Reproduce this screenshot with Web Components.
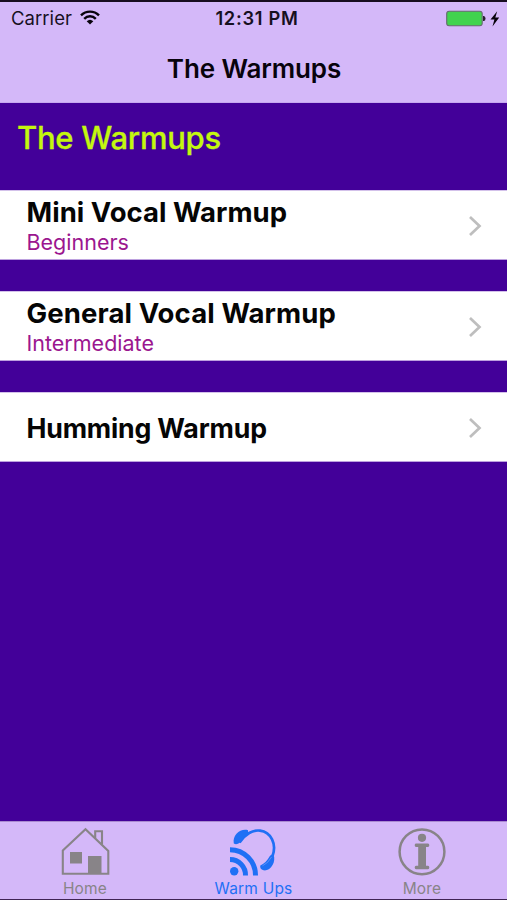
<!DOCTYPE html>
<html lang="en">
<head>
<meta charset="utf-8">
<title>The Warmups</title>
<style>
  body {
    margin: 0;
    font-family: Inter, "Liberation Sans", sans-serif;
  }
</style>
</head>
<body>
<app-screen>
  <status-bar slot="top"></status-bar>
  <nav-title slot="top">The Warmups</nav-title>
  <section-title>The Warmups</section-title>
  <warmup-row style="--spacing:0.03px">Mini Vocal Warmup<span slot="level">Beginners</span></warmup-row>
  <warmup-row style="--spacing:0.11px">General Vocal Warmup<span slot="level">Intermediate</span></warmup-row>
  <warmup-row style="--spacing:-0.18px; --size:26.7px">Humming Warmup</warmup-row>
  <tab-bar slot="bottom">
    <tab-item icon="home">Home</tab-item>
    <tab-item icon="warmups" active>Warm Ups</tab-item>
    <tab-item icon="more">More</tab-item>
  </tab-bar>
</app-screen>

<script>
function attach(el, html) {
  let template = document.createElement('template');
  template.innerHTML = html;
  el.attachShadow({ mode: "open" }).appendChild(template.content.cloneNode(true));
}

customElements.define("app-screen", class AppScreen extends HTMLElement {
  constructor() {
    super();
    attach(this, `
<style>
:host{
  display:flex;
  flex-direction:column;
  box-sizing:border-box;
  height:900px;
  overflow:hidden;
  background:#430099;
  border-top:2px solid #170d20;
  border-bottom:1px solid #402455;
}
header{
  box-sizing:border-box;
  height:101px;
  background:#d4b8f9;
  border-bottom:1px solid #c6a8ef;
}
main{
  flex:1;
}
</style>
<header><slot name="top"></slot></header>
<main><slot></slot></main>
<slot name="bottom"></slot>`);
  }
});

customElements.define("status-bar", class StatusBar extends HTMLElement {
  constructor() {
    super();
    attach(this, `
<style>
:host{
  display:grid;
  grid-template-columns:1fr auto 1fr;
  align-items:center;
  height:33px;
  padding:0 7px 0 11px;
  color:#17101f;
  font-size:18px;
  line-height:33px;
}
.left, .right{
  display:flex;
  align-items:center;
}
.right{
  justify-content:flex-end;
}
.carrier{
  font-size:18.5px;
  letter-spacing:.05px;
}
.wifi{
  margin-left:8px;
  margin-top:-2px;
}
.time{
  font-size:18.300px;
  font-weight:600;
  letter-spacing:.7px;
  padding-left:3px;
}
</style>
<div class="left">
  <span class="carrier">Carrier</span>
  <svg class="wifi" width="20" height="15" viewBox="0 0 20 15">
    <g fill="none" stroke="#08030c" stroke-width="2.4">
      <path d="M1 5.4C6 .3 14 .3 19 5.4"/>
      <path d="M4.2 8.8C7.5 5.4 12.500 5.400 15.800 8.800"/>
    </g>
    <path fill="#08030c" d="M6.700 11.200Q10 8.200 13.300 11.200L10 14.600Z"/>
  </svg>
</div>
<span class="time">12:31 PM</span>
<div class="right">
  <svg width="54" height="18" viewBox="0 0 54 18">
    <rect x=".7" y="1.200" width="35.500" height="14.600" rx="2.500" fill="#41d34f" stroke="#666a70" stroke-width="1.100"/>
    <path fill="#29222f" d="M37 6h1q1.500 .5 1.500 2.500t-1.500 2.500h-1z"/>
    <path fill="#08030c" d="M51.200 1.200L44.500 9.600H48.400L46.500 16.500L53.200 7.500H49.300Z"/>
  </svg>
</div>`);
  }
});

customElements.define("nav-title", class NavTitle extends HTMLElement {
  constructor() {
    super();
    attach(this, `
<style>
:host{
  display:block;
  height:66px;
  line-height:68px;
  text-align:center;
  font-size:26px;
  font-weight:600;
  letter-spacing:-.1px;
  color:#08030c;
  padding-left:1px;
}
</style>
<slot></slot>`);
  }
});

customElements.define("section-title", class SectionTitle extends HTMLElement {
  constructor() {
    super();
    attach(this, `
<style>
:host{
  display:block;
  height:87px;
  padding-left:17px;
  line-height:69px;
  font-size:31px;
  font-weight:500;
  letter-spacing:-.27px;
  color:#c4f70f;
  -webkit-text-stroke:.3px #c4f70f;
}
</style>
<slot></slot>`);
  }
});

customElements.define("warmup-row", class WarmupRow extends HTMLElement {
  constructor() {
    super();
    attach(this, `
<style>
:host{
  display:flex;
  align-items:center;
  justify-content:space-between;
  box-sizing:border-box;
  height:70px;
  margin-bottom:31px;
  padding:2px 25px 0 26.500px;
  background:#fff;
  border-top:1px solid #d3c1ea;
  border-bottom:1px solid #bda1df;
}
.text{
  display:flex;
  flex-direction:column;
}
.title{
  font-size:var(--size, 27.5px);
  line-height:32px;
  font-weight:700;
  letter-spacing:var(--spacing);
  color:#050505;
}
.level{
  font-size:21.500px;
  line-height:29px;
  color:#9b168f;
}
svg{
  margin-top:-1px;
}
</style>
<div class="text">
  <div class="title"><slot></slot></div>
  <div class="level"><slot name="level"></slot></div>
</div>
<svg width="14" height="22" viewBox="0 0 14 22">
  <path d="M2 2L11.500 11L2 20" fill="none" stroke="#bebebe" stroke-width="2.700"/>
</svg>`);
  }

  connectedCallback() {
    this.render();
  }

  render() {
    // rows without a level keep only the centred title
    this.shadowRoot.querySelector(".level").hidden = !this.querySelector("[slot=level]");
  }
});

customElements.define("tab-bar", class TabBar extends HTMLElement {
  constructor() {
    super();
    attach(this, `
<style>
:host{
  display:flex;
  justify-content:center;
  gap:7px;
  height:77px;
  background:#d4b8f9;
  border-top:1px solid #a98ad0;
}
::slotted(*){
  width:161.500px;
}
</style>
<slot></slot>`);
  }
});

const icons = {
  home: `
<g fill="none" stroke="currentColor" stroke-width="2.100">
  <path d="M2.800 23.500L25.500 2.200L48.300 24V46.800H2.800Z"/>
  <path d="M35.200 11V4.200H42V17.500"/>
</g>
<path fill="currentColor" d="M10 25H22V36.500H10ZM28 29H41.500V46.800H28Z"/>`,
  warmups: `
<path d="M10.500 15.500C16 7 24 2.700 31 3.600C42 5 48 17 43.500 29" fill="none" stroke="currentColor" stroke-width="2.700"/>
<path fill="currentColor" d="M19 6V3.300C12 1 3 8 4.800 16.500Q7.500 18.500 11 15.500Z"/>
<path fill="currentColor" d="M44.500 27.500C47.500 35 41.500 44.500 34.500 43.300Q30.500 42 31.300 38.500Q37.500 35.500 40.500 29.500Q42 27 44.500 27.500Z"/>
<path d="M33.500 38.800Q39.500 36 42.500 30" fill="none" stroke="#7fa2fa" stroke-width=".6"/>
<circle cx="5.200" cy="44.300" r="4.200" fill="currentColor"/>
<g fill="none" stroke="currentColor" stroke-width="5">
  <path d="M1 32.500A15.500 15.500 0 0 1 16.500 48.500"/>
  <path d="M1 22.700A25.500 25.500 0 0 1 26.500 48.500"/>
</g>`,
  more: `
<circle cx="25" cy="24.800" r="22.400" fill="none" stroke="currentColor" stroke-width="2.500"/>
<circle cx="25" cy="10.800" r="4.100" fill="currentColor"/>
<path fill="currentColor" d="M19 16.500H31Q32.300 16.500 32.300 18.200T31 20H29V38.700H31Q32.300 38.700 32.300 40.500T31 42.300H19Q17.700 42.300 17.700 40.500T19 38.700H21.200V20H19Q17.700 20 17.700 18.200T19 16.500Z"/>`
};

customElements.define("tab-item", class TabItem extends HTMLElement {
  constructor() {
    super();
    attach(this, `
<style>
:host{
  display:flex;
  flex-direction:column;
  align-items:center;
  color:#888488;
  font-size:15.500px;
  line-height:20px;
  letter-spacing:.2px;
}
:host([active]){
  color:#1f70f5;
}
svg{
  margin-top:5px;
  margin-bottom:2px;
}
</style>
<svg width="50" height="50" viewBox="0 0 50 50"></svg>
<slot></slot>`);
  }

  connectedCallback() {
    this.render();
  }

  render() {
    this.shadowRoot.querySelector("svg").innerHTML = icons[this.getAttribute("icon")];
  }
});
</script>
</body>
</html>
